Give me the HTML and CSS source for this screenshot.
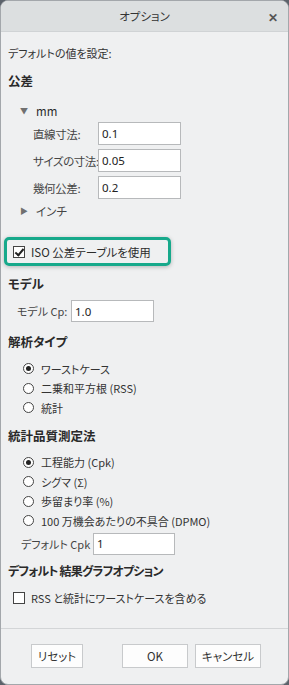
FILE: index.html
```html
<!DOCTYPE html>
<html lang="ja">
<head>
  <meta charset="UTF-8">
  <link rel="stylesheet" href="styles.css">
</head>
<body>
  <div class="dialog">
    <div class="titlebar">
      <span class="title">オプション</span>
      <span class="close">&#x2715;</span>
    </div>

    <div class="content">
      <div class="intro">デフォルトの値を設定:</div>

      <div class="section">公差</div>
      <div class="tree-row"><span class="arrow">&#9660;</span>mm</div>

      <div class="fields">
        <div class="field-row">
          <span class="field-label">直線寸法:</span>
          <input class="field" type="text" value="0.1">
        </div>
        <div class="field-row">
          <span class="field-label">サイズの寸法:</span>
          <input class="field" type="text" value="0.05">
        </div>
        <div class="field-row">
          <span class="field-label">幾何公差:</span>
          <input class="field" type="text" value="0.2">
        </div>
      </div>

      <div class="tree-row closed"><span class="arrow">&#9654;</span>インチ</div>

      <div class="iso-box">
        <span class="check checked"></span>
        <span>ISO 公差テーブルを使用</span>
      </div>

      <div class="section model">モデル</div>
      <div class="cp-row">
        <span class="cp-label">モデル Cp:</span>
        <input class="field cp" type="text" value="1.0">
      </div>

      <div class="section analysis">解析タイプ</div>
      <div class="radios">
        <div class="radio-row"><span class="radio on"></span>ワーストケース</div>
        <div class="radio-row"><span class="radio"></span>二乗和平方根 (RSS)</div>
        <div class="radio-row"><span class="radio"></span>統計</div>
      </div>

      <div class="section quality">統計品質測定法</div>
      <div class="radios">
        <div class="radio-row"><span class="radio on"></span>工程能力 (Cpk)</div>
        <div class="radio-row"><span class="radio"></span>シグマ (Σ)</div>
        <div class="radio-row"><span class="radio"></span>歩留まり率 (%)</div>
        <div class="radio-row"><span class="radio"></span>100 万機会あたりの不具合 (DPMO)</div>
      </div>

      <div class="cpk-row">
        <span class="cpk-label">デフォルト Cpk</span>
        <input class="field cpk" type="text" value="1">
      </div>

      <div class="section graph">デフォルト 結果グラフオプション</div>
      <div class="check-row">
        <span class="check"></span>
        <span>RSS と統計にワーストケースを含める</span>
      </div>
    </div>

    <div class="footer">
      <button class="btn reset">リセット</button>
      <button class="btn ok">OK</button>
      <button class="btn cancel">キャンセル</button>
    </div>
  </div>
</body>
</html>
```

FILE: styles.css
```css
html, body {
  margin: 0;
  padding: 0;
  background-color: #5c636b;
}

body {
  font-family: "Noto Sans CJK JP", "Noto Sans", sans-serif;
  font-size: 11px;
  font-feature-settings: "palt";
  color: #2b2b2b;
}

.dialog {
  box-sizing: border-box;
  width: 289px;
  height: 685px;
  background-color: #eff0f1;
  border: 1px solid #a3a7ab;
  border-radius: 8px;
  overflow: hidden;
  display: flex;
  flex-direction: column;
}

.titlebar {
  height: 30px;
  flex-shrink: 0;
  background-color: #dcdfe0;
  border-bottom: 1px solid #d0d3d5;
  display: flex;
  align-items: center;
  justify-content: center;
  position: relative;
}

.title {
  font-size: 11.5px;
  color: #333;
}

.close {
  position: absolute;
  right: 10px;
  top: 7px;
  font-size: 12px;
  font-weight: bold;
  color: #555;
}

.content {
  flex: 1;
  padding: 12px 0 0 7px;
  white-space: nowrap;
}

.intro {
  line-height: 18px;
  color: #333;
}

.section {
  font-size: 12.5px;
  font-weight: bold;
  line-height: 18px;
  margin-top: 10px;
  color: #2a2a2a;
}

.tree-row {
  line-height: 18px;
  margin-top: 12px;
  padding-left: 12px;
  display: flex;
  align-items: center;
  font-size: 11.5px;
}

.tree-row.closed {
  margin-top: 3px;
  color: #444;
}

.arrow {
  font-size: 8px;
  color: #707070;
  width: 16px;
}

.fields {
  margin-top: 2px;
  padding-left: 25px;
  display: flex;
  flex-direction: column;
  gap: 4px;
}

.field-row {
  display: flex;
  align-items: center;
  height: 23px;
}

.field-label {
  width: 65px;
  flex-shrink: 0;
  color: #444;
  font-size: 11.5px;
  letter-spacing: -0.4px;
}

.field {
  box-sizing: border-box;
  width: 83px;
  height: 23px;
  flex-shrink: 0;
  border: 1px solid #b7b9bb;
  background-color: #fff;
  font-family: "Noto Sans", "Noto Sans CJK JP", sans-serif;
  font-size: 11.5px;
  color: #222;
  padding: 0 3px;
  margin: 0;
  outline: none;
}

.iso-box {
  box-sizing: border-box;
  width: 167px;
  height: 29px;
  margin: 17px 0 0 -4px;
  border: 3px solid #17a98b;
  border-radius: 5px;
  box-shadow: 0 1px 4px rgba(0, 0, 0, 0.25);
  display: flex;
  align-items: center;
  padding-left: 6px;
  gap: 6px;
  font-size: 11.5px;
}

.check {
  box-sizing: border-box;
  width: 12px;
  height: 12px;
  border: 1px solid #444;
  background-color: #fff;
  position: relative;
  flex-shrink: 0;
}

.check.checked::after {
  content: '';
  position: absolute;
  left: 3px;
  top: 0px;
  width: 3px;
  height: 7px;
  border-right: 2px solid #222;
  border-bottom: 2px solid #222;
  transform: rotate(40deg);
}

.section.model {
  margin-top: 9px;
}

.cp-row {
  margin-top: 7px;
  padding-left: 9px;
  display: flex;
  align-items: center;
  height: 22px;
}

.cp-label {
  width: 54px;
  flex-shrink: 0;
  color: #444;
}

.field.cp {
  height: 22px;
}

.section.analysis {
  margin-top: 11px;
}

.section.quality {
  margin-top: 9px;
}

.radios {
  margin-top: 8px;
  padding-left: 15px;
}

.radio-row {
  height: 19.5px;
  display: flex;
  align-items: center;
  gap: 7px;
  color: #333;
}

.radio {
  box-sizing: border-box;
  width: 11px;
  height: 11px;
  border: 1px solid #444;
  border-radius: 50%;
  background-color: #fff;
  position: relative;
  flex-shrink: 0;
}

.radio.on::after {
  content: '';
  position: absolute;
  left: 2px;
  top: 2px;
  width: 5px;
  height: 5px;
  border-radius: 50%;
  background-color: #222;
}

.cpk-row {
  margin-top: 2px;
  padding-left: 13px;
  display: flex;
  align-items: center;
  height: 22px;
}

.cpk-label {
  width: 72px;
  flex-shrink: 0;
  color: #444;
}

.field.cpk {
  width: 82px;
  height: 22px;
}

.section.graph {
  margin-top: 7px;
  font-size: 12px;
  letter-spacing: -0.8px;
}

.check-row {
  margin-top: 9px;
  padding-left: 5px;
  display: flex;
  align-items: center;
  gap: 6px;
  line-height: 18px;
  color: #333;
}

.footer {
  flex-shrink: 0;
  height: 56px;
  border-top: 1px solid #d3d5d7;
  display: flex;
  align-items: flex-start;
  padding-top: 15px;
  box-sizing: border-box;
}

.btn {
  box-sizing: border-box;
  height: 24px;
  background-color: #fdfdfd;
  border: 1px solid #c8cacc;
  border-radius: 0;
  font-family: "Noto Sans CJK JP", "Noto Sans", sans-serif;
  font-feature-settings: "palt";
  font-size: 11.5px;
  color: #333;
  padding: 0;
}

.btn.reset {
  width: 52px;
  margin-left: 30px;
}

.btn.ok {
  width: 66px;
  margin-left: 39px;
}

.btn.cancel {
  width: 66px;
  margin-left: 7px;
}
```
